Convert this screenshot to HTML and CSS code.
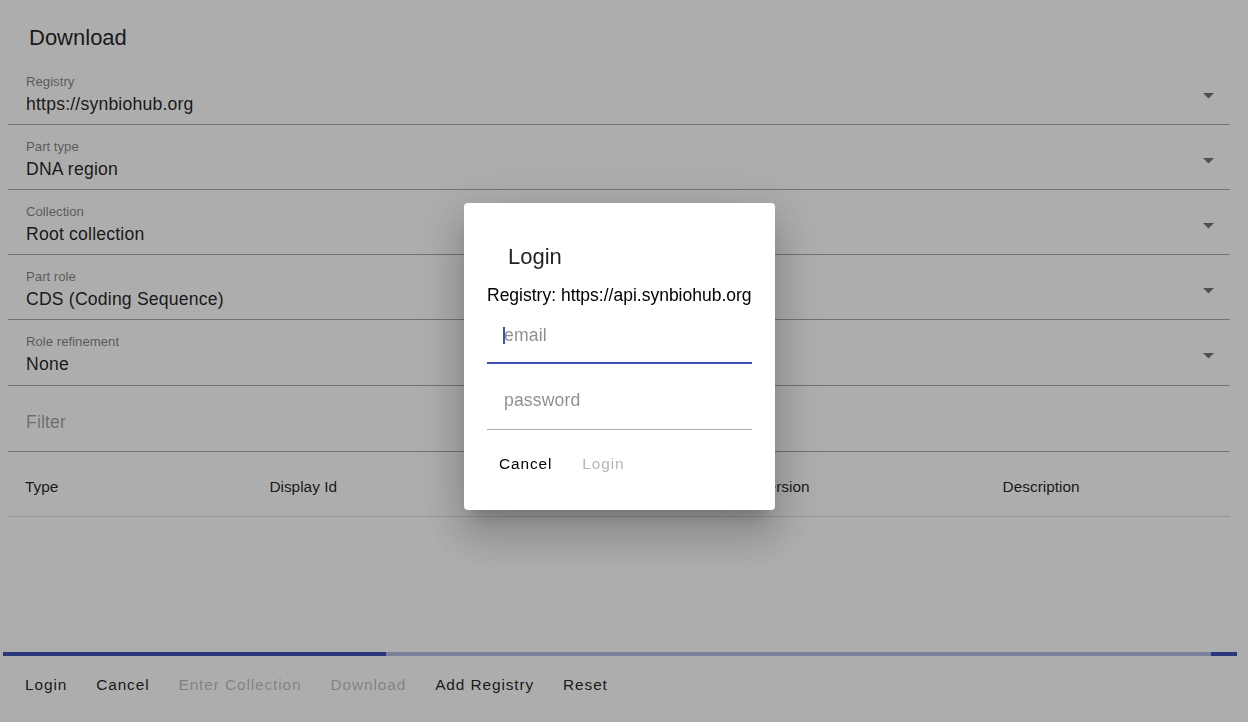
FILE: index.html
```html
<!DOCTYPE html>
<html lang="en">

<head>
    <meta charset="UTF-8">
    <meta name="viewport" content="width=device-width, initial-scale=1.0">
    <title>Download</title>
    <link rel="stylesheet" href="styles.css">
</head>

<body>

    <div class="page">
        <h2 class="title">Download</h2>

        <div class="field select">
            <div class="field-text">
                <div class="label">Registry</div>
                <div class="value">https://synbiohub.org</div>
            </div>
            <svg class="arrow" viewBox="7 10 10 5"><path d="M7 10l5 5 5-5z"/></svg>
        </div>

        <div class="field select">
            <div class="field-text">
                <div class="label">Part type</div>
                <div class="value">DNA region</div>
            </div>
            <svg class="arrow" viewBox="7 10 10 5"><path d="M7 10l5 5 5-5z"/></svg>
        </div>

        <div class="field select">
            <div class="field-text">
                <div class="label">Collection</div>
                <div class="value">Root collection</div>
            </div>
            <svg class="arrow" viewBox="7 10 10 5"><path d="M7 10l5 5 5-5z"/></svg>
        </div>

        <div class="field select">
            <div class="field-text">
                <div class="label">Part role</div>
                <div class="value">CDS (Coding Sequence)</div>
            </div>
            <svg class="arrow" viewBox="7 10 10 5"><path d="M7 10l5 5 5-5z"/></svg>
        </div>

        <div class="field select tall">
            <div class="field-text">
                <div class="label">Role refinement</div>
                <div class="value">None</div>
            </div>
            <svg class="arrow" viewBox="7 10 10 5"><path d="M7 10l5 5 5-5z"/></svg>
        </div>

        <div class="field filter">
            <input type="text" placeholder="Filter">
        </div>

        <div class="results">
            <table class="parts">
                <thead>
                    <tr>
                        <th>Type</th>
                        <th>Display Id</th>
                        <th>Name</th>
                        <th>Version</th>
                        <th>Description</th>
                    </tr>
                </thead>
                <tbody></tbody>
            </table>
        </div>

        <div class="progress">
            <div class="bar bar1"></div>
            <div class="bar bar2"></div>
        </div>

        <div class="actions">
            <button class="btn">Login</button>
            <button class="btn">Cancel</button>
            <button class="btn" disabled>Enter Collection</button>
            <button class="btn" disabled>Download</button>
            <button class="btn">Add Registry</button>
            <button class="btn">Reset</button>
        </div>
    </div>

    <!-- login dialog on top of the download form -->
    <div class="backdrop"></div>
    <div class="dialog-wrap">
        <div class="dialog">
            <h2 class="dialog-title">Login</h2>
            <div class="registry">Registry: https://api.synbiohub.org</div>
            <div class="dlg-field email">
                <span class="caret"></span>
                <input type="text" placeholder="email">
            </div>
            <div class="dlg-field password">
                <input type="password" placeholder="password">
            </div>
            <div class="dialog-actions">
                <button class="btn">Cancel</button>
                <button class="btn" disabled>Login</button>
            </div>
        </div>
    </div>

</body>
</html>
```

FILE: styles.css
```css
body {
    margin: 0;
    background-color: #fff;
    font-family: "Liberation Sans", Arial, sans-serif;
    color: rgba(0, 0, 0, 0.87);
    overflow: hidden;
}

.page {
    margin: 0 18px 0 8px;
}

.title {
    margin: 0;
    padding: 26px 0 10px 21px;
    font-size: 22px;
    line-height: 24px;
    font-weight: normal;
}

/* ---------- form rows ---------- */

.field {
    display: flex;
    align-items: center;
    padding: 15px 16px 10px 18px;
    border-bottom: 1px solid rgba(0, 0, 0, 0.34);
}

.field.tall {
    padding-bottom: 11px;
}

.field-text {
    flex: 1;
}

.label {
    font-size: 13.2px;
    line-height: 14px;
    color: rgba(0, 0, 0, 0.5);
}

.value {
    margin-top: 5px;
    font-size: 17.6px;
    line-height: 20px;
    letter-spacing: 0.2px;
}

.arrow {
    width: 11px;
    height: 5.5px;
    margin-top: 3px;
    fill: rgba(0, 0, 0, 0.54);
}

.filter {
    padding-top: 26px;
    padding-bottom: 19px;
}

input {
    width: 100%;
    padding: 0;
    border: none;
    outline: none;
    background: none;
    font-family: inherit;
    font-size: 17.6px;
    line-height: 20px;
    height: 20px;
    color: rgba(0, 0, 0, 0.87);
    letter-spacing: 0.15px;
}

input::placeholder {
    color: rgba(0, 0, 0, 0.38);
    opacity: 1;
}

/* ---------- table ---------- */

.results {
    height: 200px;
}

.parts {
    width: 100%;
    table-layout: fixed;
    border-collapse: collapse;
}

.parts th {
    text-align: left;
    font-weight: normal;
    font-size: 15.4px;
    line-height: 20px;
    padding: 25px 0 19px 17px;
    border-bottom: 1px solid #e0e0e0;
}

/* ---------- progress ---------- */

.progress {
    position: relative;
    height: 4px;
    margin: 0 -7px 0 -5px;
    background-color: #b6bde3;
    overflow: hidden;
}

.bar {
    position: absolute;
    top: 0;
    bottom: 0;
    background-color: #3f51b5;
}

.bar1 {
    left: 0;
    width: 383px;
}

.bar2 {
    right: 0;
    width: 26px;
}

/* ---------- buttons ---------- */

.actions {
    display: flex;
    padding: 13px 0 0 2.5px;
}

.btn {
    padding: 6px 14.5px;
    border: none;
    background: none;
    font-family: inherit;
    font-size: 15.4px;
    line-height: 20px;
    letter-spacing: 0.9px;
    color: rgba(0, 0, 0, 0.87);
    cursor: pointer;
}

.btn:disabled {
    color: rgba(0, 0, 0, 0.27);
    cursor: default;
}

/* ---------- login dialog ---------- */

.backdrop {
    position: fixed;
    inset: 0;
    background-color: rgba(0, 0, 0, 0.32);
}

.dialog-wrap {
    position: fixed;
    inset: 0;
    display: flex;
    align-items: center;
    justify-content: center;
    padding: 0 9px 9px 0;
}

.dialog {
    width: 311px;
    box-sizing: border-box;
    padding: 41px 23px 36px;
    background-color: #fff;
    border-radius: 4px;
    box-shadow: 0 12px 16px -8px rgba(0, 0, 0, 0.2),
        0 26px 42px 3px rgba(0, 0, 0, 0.14),
        0 10px 50px 9px rgba(0, 0, 0, 0.12);
}

.dialog-title {
    margin: 0 0 0 21px;
    font-size: 22px;
    line-height: 26px;
    font-weight: normal;
}

.registry {
    margin-top: 15px;
    font-size: 17.5px;
    line-height: 20px;
    color: #000;
    white-space: nowrap;
}

.dlg-field {
    position: relative;
    padding-left: 17px;
}

.dlg-field input {
    height: 24px;
    line-height: 24px;
}

.dlg-field input::placeholder {
    color: rgba(0, 0, 0, 0.45);
}

.email {
    padding-top: 18px;
    padding-bottom: 15px;
    border-bottom: 2px solid #3f51b5;
}

.password {
    padding-top: 24px;
    padding-bottom: 17px;
    border-bottom: 1px solid rgba(0, 0, 0, 0.32);
}

.caret {
    position: absolute;
    left: 16px;
    top: 22px;
    width: 1.5px;
    height: 17px;
    background-color: #3f51b5;
}

.dialog-actions {
    display: flex;
    margin: 24px 0 0 -3px;
}

.dialog-actions .btn {
    padding: 0 15px;
    color: #000;
}

.dialog-actions .btn:disabled {
    color: rgba(0, 0, 0, 0.3);
}
```
